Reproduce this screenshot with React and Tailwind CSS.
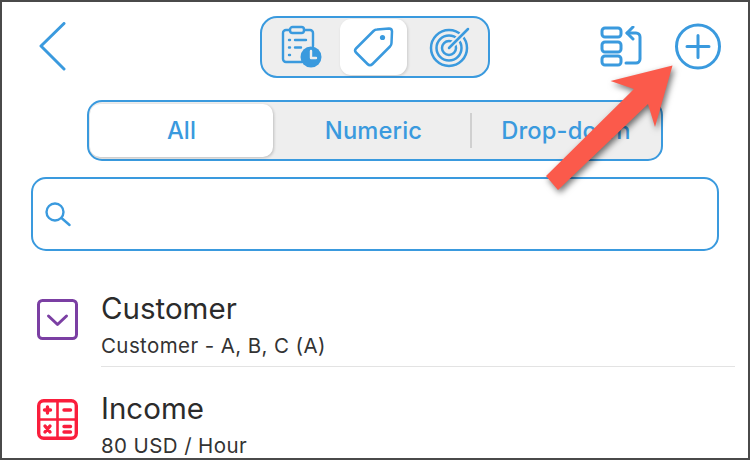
import React from 'react';

const BLUE = '#3a9ade';

const BackIcon = () => (
  <svg width="30" height="50" viewBox="0 0 30 50" fill="none" stroke={BLUE} strokeWidth="3" strokeLinecap="round" strokeLinejoin="round">
    <path d="M26 1.500 L3 24 L26 47" />
  </svg>
);

const ClipboardIcon = () => (
  <svg width="42" height="44" viewBox="0 0 42 44" fill="none" stroke={BLUE} strokeWidth="2.400" strokeLinecap="round" strokeLinejoin="round">
    <path d="M9 5 H5 a3 3 0 0 0 -3 3 V34 a3 3 0 0 0 3 3 H21" />
    <path d="M23 5 H29 a3 3 0 0 1 3 3 V21" />
    <rect x="9" y="2" width="14" height="6" rx="2.5" />
    <path d="M8 15 H9 M14 15 H25 M8 22.500 H9 M14 22.500 H20 M8 30 H9" />
    <circle cx="30" cy="32" r="10.500" fill={BLUE} stroke="none" />
    <path d="M30 26 V33 H35" stroke="#eeeeee" />
  </svg>
);

const TagIcon = () => (
  <svg width="42" height="42" viewBox="0 0 42 42" fill="none" stroke={BLUE} strokeWidth="2.500" strokeLinejoin="round">
    <path d="M3 22.500 L20.500 5 Q22 3.500 24 3.500 L36 2.500 Q39 2.500 39 5.500 L38.500 17 Q38.500 19 37 20.500 L19.500 38 Q17 40.500 14.500 38 L3 26.500 Q1 24.500 3 22.500 Z" />
    <circle cx="29.500" cy="11.500" r="2.600" fill={BLUE} stroke="none" />
  </svg>
);

const TargetIcon = () => (
  <svg width="42" height="42" viewBox="0 0 42 42" fill="none" stroke={BLUE} strokeWidth="2.500" strokeLinecap="round">
    <circle cx="20" cy="22" r="18" />
    <circle cx="20" cy="22" r="12.500" />
    <circle cx="20" cy="22" r="7" />
    <path d="M20 22 L39 3" stroke="#eeeeee" strokeWidth="6" />
    <path d="M20 22 L39 3" />
  </svg>
);

const ReorderIcon = () => (
  <svg width="42" height="42" viewBox="0 0 42 42" fill="none" stroke={BLUE} strokeWidth="3" strokeLinecap="round" strokeLinejoin="round">
    <rect x="2" y="2" width="19" height="9" rx="3" />
    <rect x="2" y="16" width="19" height="10" rx="3" />
    <rect x="2" y="30" width="19" height="9" rx="3" />
    <path d="M26 37 H36 a4 4 0 0 0 4 -4 V11 a4 4 0 0 0 -4 -4 H27" />
    <path d="M33 1 L27 7 L33 13" />
  </svg>
);

const PlusIcon = () => (
  <svg width="48" height="48" viewBox="0 0 48 48" fill="none" stroke={BLUE} strokeWidth="3" strokeLinecap="round">
    <circle cx="24" cy="23.500" r="21.500" />
    <path d="M13 23.500 H35 M24 12.500 V34.500" />
  </svg>
);

const SearchIcon = () => (
  <svg width="26" height="28" viewBox="0 0 26 28" fill="none" stroke={BLUE} strokeWidth="2.400" strokeLinecap="round">
    <circle cx="10" cy="12" r="8.500" />
    <path d="M16.500 18 L24.500 25" />
  </svg>
);

const DropdownIcon = () => (
  <svg width="41" height="41" viewBox="0 0 41 41" fill="none" stroke="#7b3fa3" strokeWidth="3" strokeLinecap="round" strokeLinejoin="round">
    <rect x="1.500" y="1.500" width="38" height="38" rx="4" />
    <path d="M11.500 17 L20.500 25.500 L29.500 17" />
  </svg>
);

const CalculatorIcon = () => (
  <svg width="41" height="41" viewBox="0 0 41 41" fill="none" stroke="#fa1e3c" strokeWidth="3.400" strokeLinecap="round">
    <rect x="1.700" y="1.700" width="37.600" height="37.600" rx="5" />
    <path d="M20.500 2 V39 M2 20.500 H39" strokeWidth="2.600" strokeLinecap="butt" />
    <path d="M7.500 11 H13.500 M10.500 8 V14 M27 11 H33.500" />
    <path d="M8 27 L13 33 M13 27 L8 33 M27 27.500 H33.500 M27 33 H33.500" />
  </svg>
);

const PointerArrow = () => (
  <svg
    className="absolute top-0 left-0 pointer-events-none drop-shadow-[2px_3px_3px_rgba(0,0,0,0.55)]"
    width="746"
    height="456"
    viewBox="2 2 746 456"
  >
    <path d="M672.500 65.500 L610.500 81 L634 89 L546 176 L558 190 L648 104 L655 127 Z" fill="#fb5a4b" />
  </svg>
);

const rows = [
  { name: 'Customer', detail: 'Customer - A, B, C (A)', icon: <DropdownIcon /> },
  { name: 'Income', detail: '80 USD / Hour', icon: <CalculatorIcon /> },
];

export default function App() {
  return (
    <div className="relative w-[750px] h-[460px] overflow-hidden border-2 border-[#4a4a4a] bg-white font-['Inter','Liberation_Sans',sans-serif]">
      {/* top bar */}
      <div className="flex items-center h-[62px] mt-[14px] pl-[36px]">
        <BackIcon />
        <div className="flex items-center w-[230px] h-[62px] ml-[192px] rounded-[17px] border-2 border-[#3a9ade] bg-[#eeeeee]">
          <div className="flex justify-center w-[78px] pl-[2px]">
            <ClipboardIcon />
          </div>
          <div className="flex items-center justify-center w-[67px] h-[56px] rounded-[11px] bg-white shadow-[1px_1px_3px_rgba(0,0,0,0.15)]">
            <TagIcon />
          </div>
          <div className="flex justify-center flex-1 pl-[4px]">
            <TargetIcon />
          </div>
        </div>
        <div className="ml-[110px]">
          <ReorderIcon />
        </div>
        <div className="ml-[32px]">
          <PlusIcon />
        </div>
      </div>

      {/* type filter */}
      <div className="flex items-center w-[576px] h-[61px] mt-[22px] ml-[85px] px-[1px] rounded-[15px] border-2 border-[#3a9ade] bg-[#eeeeee] text-[23.7px] tracking-[0.15px] font-medium text-[#3a9ade]">
        <div className="flex items-center justify-center w-[183px] h-[53px] pt-[1px] rounded-[10px] bg-white shadow-[1px_1px_3px_rgba(0,0,0,0.2)]">All</div>
        <div className="flex items-center justify-center w-[197px] pl-[4px] pt-[1px]">Numeric</div>
        <div className="w-[2px] h-[35px] bg-[#d0d0d0]" />
        <div className="flex items-center justify-center flex-1 pt-[1px]">Drop-down</div>
      </div>

      {/* search */}
      <div className="flex items-center w-[688px] h-[74px] mt-[16px] ml-[29px] pl-[12px] rounded-[15px] border-2 border-[#3a9ade]">
        <SearchIcon />
      </div>

      {/* list */}
      <div className="mt-[39px] ml-[35px] mr-[13px]">
        {rows.map((row, i) => (
          <div key={row.name} className="flex gap-[23px] h-[100px]">
            <div className="pt-[9px]">{row.icon}</div>
            <div className="flex-1">
              <div className={`h-[77px] ${i === 0 ? 'border-b border-[#e3e3e3]' : ''}`}>
                <div className="text-[29.5px] leading-[36px] text-[#2b2b2b]">{row.name}</div>
                <div className="mt-[8px] text-[20.5px] leading-[24px] tracking-[0.4px] text-[#333333]">{row.detail}</div>
              </div>
            </div>
          </div>
        ))}
      </div>

      <PointerArrow />
    </div>
  );
}
